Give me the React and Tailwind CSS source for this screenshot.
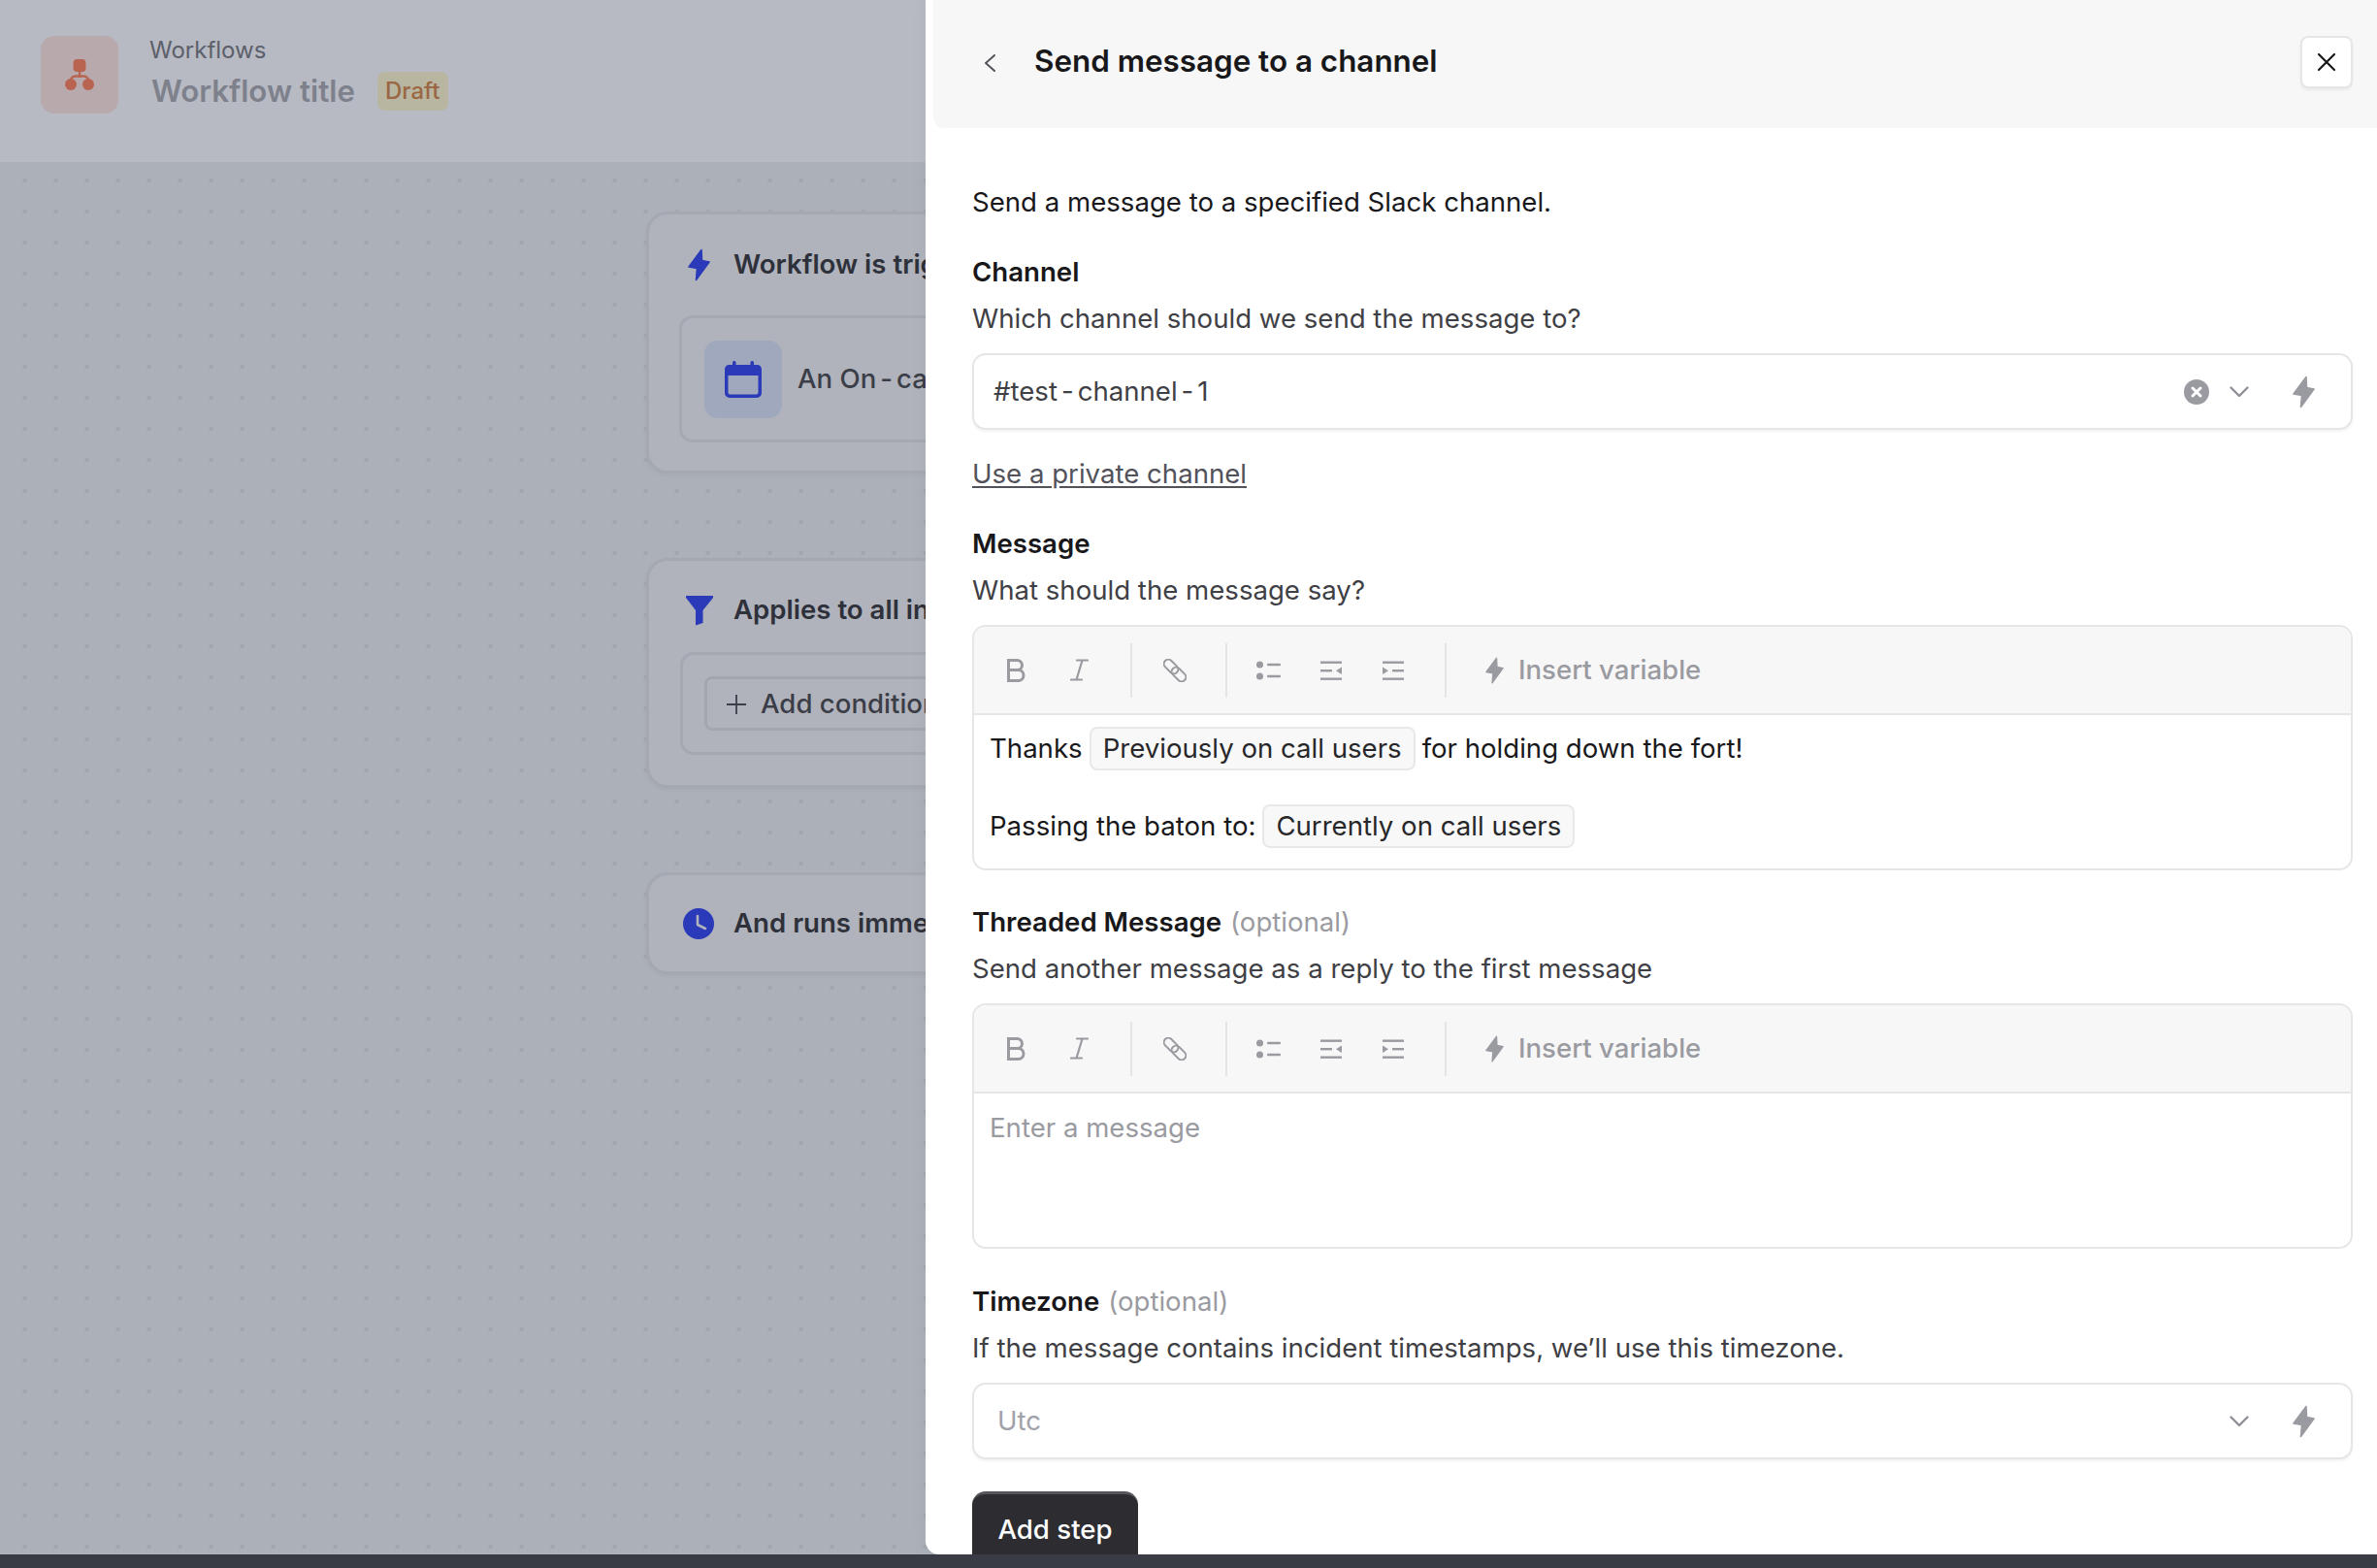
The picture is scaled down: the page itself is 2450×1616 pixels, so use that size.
const Bolt = ({ className = "w-[23px] h-[34px]", color = "#9a9aa1" }) => (
  <svg viewBox="0 0 23 34" className={className} fill={color} stroke={color} strokeWidth="1.6" strokeLinejoin="round">
    <path d="M14 1.5 L1 19 L9.5 20.5 L8.5 32.5 L22 14 L14.5 12.5 Z" />
  </svg>
);

const Chevron = () => (
  <svg viewBox="0 0 20 12" className="w-[20px] h-[12px]" fill="none" stroke="#8f8f97" strokeWidth="2.4" strokeLinecap="round" strokeLinejoin="round">
    <path d="M1.5 1.5 L10 10 L18.5 1.5" />
  </svg>
);

const Sep = ({ ml }) => <div className={`w-[2px] h-[56px] bg-[#e4e4e6] ${ml}`} />;

const Hy = () => <span className="mx-[4px]">-</span>;

const Toolbar = () => (
  <div className="h-[91px] shrink-0 flex items-center bg-[#f7f7f7] border-b-2 border-[#e6e6e8]">
    <svg viewBox="0 0 19 24" className="w-[19px] h-[24px] ml-[34px]" fill="none" stroke="#9a9aa1" strokeWidth="3">
      <path d="M1.5 1.5 H10.5 A5 5 0 0 1 10.5 11.5 H1.5 Z M1.5 11.5 H11.5 A5.5 5.5 0 0 1 11.5 22.5 H1.5 Z" />
    </svg>
    <svg viewBox="0 0 19 23" className="w-[19px] h-[23px] ml-[46px]" fill="none" stroke="#9a9aa1" strokeWidth="2.2" strokeLinecap="round">
      <path d="M7 1.5 H18 M1 21.5 H12 M12.5 1.5 L6.5 21.5" />
    </svg>
    <Sep ml="ml-[43px]" />
    <svg viewBox="0 0 24 24" className="w-[24px] h-[24px] ml-[32px]" fill="none" stroke="#9a9aa1" strokeWidth="2">
      <rect x="-0.5" y="3.5" width="17" height="9" rx="4.5" transform="rotate(45 8 8)" />
      <rect x="7.5" y="11.5" width="17" height="9" rx="4.5" transform="rotate(45 16 16)" />
    </svg>
    <Sep ml="ml-[40px]" />
    <svg viewBox="0 0 25 20" className="w-[25px] h-[20px] ml-[30px]" fill="#9a9aa1">
      <circle cx="3.5" cy="4" r="3.5" />
      <circle cx="3.5" cy="16" r="3.5" />
      <rect x="11" y="2.8" width="14" height="2.4" rx="1" />
      <rect x="11" y="14.8" width="14" height="2.4" rx="1" />
    </svg>
    <svg viewBox="0 0 22 20" className="w-[22px] h-[20px] ml-[41px]" fill="#9a9aa1">
      <rect y="0.5" width="22" height="2.4" />
      <rect y="9" width="12" height="2.4" />
      <rect y="17.5" width="22" height="2.4" />
      <path d="M16 10.2 L22 6.5 V14 Z" />
    </svg>
    <svg viewBox="0 0 22 20" className="w-[22px] h-[20px] ml-[42px]" fill="#9a9aa1">
      <rect y="0.5" width="22" height="2.4" />
      <rect x="10" y="9" width="12" height="2.4" />
      <rect y="17.5" width="22" height="2.4" />
      <path d="M6 10.2 L0 6.5 V14 Z" />
    </svg>
    <Sep ml="ml-[42px]" />
    <Bolt className="w-[19px] h-[28px] ml-[40px]" />
    <span className="ml-[15px] text-[#9a9aa1] font-medium">Insert variable</span>
  </div>
);

const Chip = ({ children }) => (
  <span className="mx-[7px] inline-flex items-center h-[45px] px-[12px] rounded-[8px] border-2 border-[#e8e8ea] bg-[#f8f8f8] text-[#27272a]">
    {children}
  </span>
);

const Label = ({ children, optional, mt }) => (
  <div className={`${mt} h-[34px] leading-[34px] font-semibold text-[#18181b]`}>
    {children}
    {optional && <span className="ml-[9px] font-normal text-[#9a9aa1]">(optional)</span>}
  </div>
);

const Help = ({ children }) => <div className="mt-[14px] h-[34px] leading-[34px] text-[#3f3f46]">{children}</div>;

const Field = ({ children, mt = "mt-[19px]" }) => (
  <div className={`${mt} h-[79px] flex items-center relative rounded-[14px] border-2 border-[#e6e6e8] bg-white shadow-[0_2px_3px_rgba(0,0,0,0.05)]`}>
    {children}
  </div>
);

const Card = ({ children, className }) => (
  <div className={`w-[900px] rounded-[22px] border-[3px] border-[#a4a8b1] bg-[#b0b3bc] shadow-[0_2px_4px_rgba(0,0,0,0.04)] ${className}`}>
    {children}
  </div>
);

const CardTitle = ({ icon, children, className = "" }) => (
  <div className={`flex items-center h-[36px] ${className}`}>
    <div className="w-[87px] shrink-0 flex items-center">{icon}</div>
    <span className="font-semibold text-[#2e303a] whitespace-nowrap text-[27.6px]">{children}</span>
  </div>
);

export default function App() {
  return (
    <div className="w-[2450px] h-[1616px] overflow-hidden flex flex-col bg-[#acb0b9] font-[family-name:Inter,sans-serif] text-[27.6px]">
      <div className="relative flex-1 flex flex-col overflow-hidden">
        <header className="h-[169px] shrink-0 flex items-start bg-[#b7bac3] border-b-2 border-[#aeb1ba]">
          <div className="mt-[37px] ml-[42px] w-[80px] h-[80px] rounded-[14px] bg-[#b8a9ad] flex items-center justify-center">
            <svg viewBox="0 0 30 32" className="w-[30px] h-[32px]" fill="#b96450">
              <rect x="8.5" y="0" width="13" height="13" rx="4" />
              <rect x="13.8" y="12" width="2.4" height="7" />
              <path d="M6 24 V22 A4.5 4.5 0 0 1 10.5 17.5 H19.5 A4.5 4.5 0 0 1 24 22 V24" fill="none" stroke="#b96450" strokeWidth="2.4" />
              <ellipse cx="6" cy="26" rx="6" ry="6" />
              <ellipse cx="24" cy="26" rx="6" ry="6" />
            </svg>
          </div>
          <div className="ml-[32px] mt-[35px]">
            <div className="h-[34px] leading-[34px] text-[#5c5f6a] text-[24px]">Workflows</div>
            <div className="mt-[4px] flex items-center h-[42px] ml-[2px]">
              <span className="text-[31.25px] font-semibold text-[#7e818c]">Workflow title</span>
              <span className="ml-[23px] h-[40px] px-[8px] rounded-[8px] bg-[#b8b6a0] flex items-center text-[#9a6644] font-medium text-[24px]">Draft</span>
            </div>
          </div>
        </header>

        <main className="flex-1 pl-[666px] pt-[49px] bg-[#acb0b9] bg-[radial-gradient(circle,#a2a6af_2px,transparent_2.5px)] bg-[size:32px_32px] bg-[position:9.5px_1px]">
          <Card className="h-[270px] pt-[34px]">
            <CardTitle icon={<Bolt className="w-[23px] h-[34px] ml-[40px]" color="#2a3ab8" />}>Workflow is triggered when</CardTitle>
            <div className="mt-[34px] ml-[31px] w-[840px] h-[131px] rounded-[14px] border-[3px] border-[#a4a8b1] flex items-center pl-[23px]">
              <div className="w-[80px] h-[80px] rounded-[14px] bg-[#9fa8bd] flex items-center justify-center">
                <svg viewBox="0 0 38 38" className="w-[38px] h-[38px]" fill="#2a3ab8">
                  <rect x="8" y="0" width="3.5" height="8" rx="1.5" />
                  <rect x="26.5" y="0" width="3.5" height="8" rx="1.5" />
                  <path d="M4.5 4 H33.5 A4.5 4.5 0 0 1 38 8.5 V33 A5 5 0 0 1 33 38 H5 A5 5 0 0 1 0 33 V8.5 A4.5 4.5 0 0 1 4.5 4 Z M3.5 15 V32.5 A2 2 0 0 0 5.5 34.5 H32.5 A2 2 0 0 0 34.5 32.5 V15 Z" fillRule="evenodd" />
                </svg>
              </div>
              <span className="ml-[16px] text-[#3b3d47] font-medium text-[27.6px] whitespace-nowrap">An On<Hy />call shift changes</span>
            </div>
          </Card>

          <Card className="h-[237px] mt-[87px] pt-[33px]">
            <CardTitle icon={
              <svg viewBox="0 0 30 31" className="w-[30px] h-[31px] ml-[37px]" fill="#2a3ab8">
                <path d="M1 0 H29 V2 L18.5 15 V28 L11 30.5 V15 L1 2 Z" />
              </svg>
            }>Applies to all incidents</CardTitle>
            <div className="mt-[25px] ml-[32px] w-[840px] h-[106px] rounded-[14px] border-[3px] border-[#a4a8b1] flex items-center pl-[22px]">
              <div className="h-[56px] w-[400px] rounded-[8px] border-[3px] border-[#a3a6af] flex items-center pl-[20px] text-[#3b3d47] font-medium text-[27.6px] pt-[1px]">
                <svg viewBox="0 0 20 20" className="w-[20px] h-[20px]" fill="none" stroke="#3b3d47" strokeWidth="1.8">
                  <path d="M10 0 V20 M0 10 H20" />
                </svg>
                <span className="ml-[15px]">Add condition</span>
              </div>
            </div>
          </Card>

          <Card className="h-[105px] mt-[87px] pt-[32px]">
            <CardTitle icon={
              <svg viewBox="0 0 32 32" className="w-[32px] h-[32px] ml-[35px]">
                <circle cx="16" cy="16" r="16" fill="#2a3ab8" />
                <path d="M15 8 V17 L23 21" fill="none" stroke="#b0b3bc" strokeWidth="2.6" strokeLinecap="round" strokeLinejoin="round" />
              </svg>
            }>And runs immediately</CardTitle>
          </Card>
        </main>

        <aside className="absolute top-0 right-0 bottom-0 w-[1496px] bg-white rounded-bl-[14px] overflow-hidden flex flex-col shadow-[-6px_0_14px_rgba(0,0,0,0.025)]">
          <div className="h-[132px] shrink-0 ml-[8px] bg-[#f7f7f7] rounded-bl-[10px] flex items-center relative">
            <svg viewBox="0 0 14 20" className="ml-[51px] w-[14px] h-[20px] -translate-y-[1px]" fill="none" stroke="#52525b" strokeWidth="2" strokeLinecap="round" strokeLinejoin="round">
              <path d="M12 2 L3 10 L12 18" />
            </svg>
            <span className="ml-[39px] text-[31.4px] font-semibold text-[#18181b] leading-none -translate-y-[2px]">Send message to a channel</span>
            <button className="absolute right-[25px] top-[37px] w-[54px] h-[54px] rounded-[8px] border-2 border-[#e6e6e8] bg-white flex items-center justify-center shadow-[0_2px_3px_rgba(0,0,0,0.06)]">
              <svg viewBox="0 0 20 20" className="w-[20px] h-[20px]" fill="none" stroke="#18181b" strokeWidth="2.2" strokeLinecap="round">
                <path d="M2 2 L18 18 M18 2 L2 18" />
              </svg>
            </button>
          </div>

          <div className="flex-1 pl-[48px] pr-[25px] pt-[59px] flex flex-col">
            <div className="h-[34px] leading-[35px] text-[#18181b]">Send a message to a specified Slack channel.</div>

            <Label mt="mt-[38px]">Channel</Label>
            <Help>Which channel should we send the message to?</Help>
            <Field>
              <span className="ml-[20px] text-[#3f3f46]">#test<Hy />channel<Hy />1</span>
              <div className="ml-auto flex items-center">
                <svg viewBox="0 0 26 26" className="w-[26px] h-[26px]">
                  <circle cx="13" cy="13" r="13" fill="#9a9aa1" />
                  <path d="M9 9 L17 17 M17 9 L9 17" stroke="#fff" strokeWidth="3" strokeLinecap="round" />
                </svg>
                <div className="ml-[21px]"><Chevron /></div>
                <div className="ml-[45px] mr-[37px]"><Bolt /></div>
              </div>
            </Field>
            <div className="mt-[28px] h-[34px] leading-[34px] text-[#52525b] underline underline-offset-[3px]">Use a private channel</div>

            <Label mt="mt-[38px]">Message</Label>
            <Help>What should the message say?</Help>
            <div className="mt-[19px] h-[253px] flex flex-col rounded-[14px] border-2 border-[#e6e6e8] overflow-hidden bg-white">
              <Toolbar />
              <div className="pl-[16px] pt-[12px] text-[#18181b]">
                <div className="h-[45px] flex items-center">Thanks <Chip>Previously on call users</Chip> for holding down the fort!</div>
                <div className="h-[45px] mt-[35px] flex items-center">Passing the baton to: <Chip>Currently on call users</Chip></div>
              </div>
            </div>

            <Label mt="mt-[36px]" optional>Threaded Message</Label>
            <Help>Send another message as a reply to the first message</Help>
            <div className="mt-[19px] h-[253px] flex flex-col rounded-[14px] border-2 border-[#e6e6e8] overflow-hidden bg-white">
              <Toolbar />
              <div className="pl-[16px] pt-[17px] h-[34px] leading-[36px] text-[#9a9aa1]">Enter a message</div>
            </div>

            <Label mt="mt-[37px]" optional>Timezone</Label>
            <Help>If the message contains incident timestamps, we’ll use this timezone.</Help>
            <Field>
              <span className="ml-[24px] text-[#a1a1aa]">Utc</span>
              <div className="ml-auto flex items-center">
                <Chevron />
                <div className="ml-[45px] mr-[37px]"><Bolt /></div>
              </div>
            </Field>
            <button className="mt-[33px] w-[171px] h-[80px] shrink-0 rounded-[14px] bg-[#2c2c31] text-white font-medium border-t-[3px] border-[#55555c] pb-[3px]">Add step</button>
          </div>
        </aside>
      </div>
      <div className="h-[14px] shrink-0 bg-[#3a3c45]" />
    </div>
  );
}
